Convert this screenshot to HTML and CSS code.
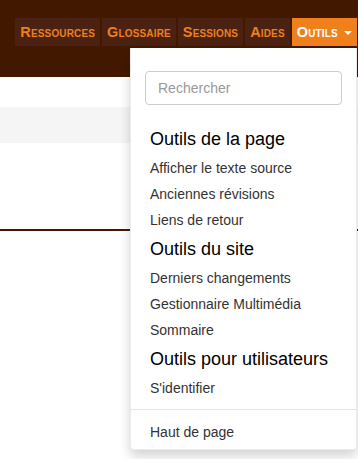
FILE: index.html
```html
<!DOCTYPE html>
<html lang="fr">
<head>
  <meta charset="UTF-8" />
  <title>Outils</title>
  <meta name="viewport" content="width=device-width, initial-scale=1.0" />
  <link rel="stylesheet" href="styles.css">
</head>
<body>

  <header class="navbar">
    <ul class="nav">
      <li class="nav-item"><a href="#">Ressources</a></li>
      <li class="nav-item"><a href="#">Glossaire</a></li>
      <li class="nav-item"><a href="#">Sessions</a></li>
      <li class="nav-item"><a href="#">Aides</a></li>
      <li class="nav-item open">
        <a href="#">Outils <span class="caret"></span></a>

        <!-- Tools dropdown -->
        <div class="dropdown-menu">
          <form class="search">
            <input type="text" placeholder="Rechercher" />
          </form>

          <div class="dropdown-header first">Outils de la page</div>
          <a class="dropdown-item" href="#">Afficher le texte source</a>
          <a class="dropdown-item" href="#">Anciennes révisions</a>
          <a class="dropdown-item" href="#">Liens de retour</a>

          <div class="dropdown-header">Outils du site</div>
          <a class="dropdown-item" href="#">Derniers changements</a>
          <a class="dropdown-item" href="#">Gestionnaire Multimédia</a>
          <a class="dropdown-item" href="#">Sommaire</a>

          <div class="dropdown-header">Outils pour utilisateurs</div>
          <a class="dropdown-item" href="#">S'identifier</a>

          <div class="divider"></div>
          <a class="dropdown-item last" href="#">Haut de page</a>
        </div>
      </li>
    </ul>
  </header>

  <div class="page">
    <div class="spacer"></div>
    <div class="breadcrumb"></div>
    <div class="content"></div>
    <div class="rule"></div>
  </div>

</body>
</html>
```

FILE: styles.css
```css
html,
body {
  min-height: 100vh;
}

body {
  font-family: 'Liberation Sans', Arial, sans-serif;
  background: #fff;
  margin: 0;
  color: #333;
}

a {
  text-decoration: none;
}

.navbar {
  background: #421900;
  height: 77px;
  padding-top: 18px;
  box-sizing: border-box;
}

.nav {
  list-style: none;
  margin: 0;
  padding: 0 1px 0 0;
  display: flex;
  justify-content: flex-end;
  gap: 2px;
}

.nav-item {
  position: relative;
  flex-shrink: 0;
}

.nav-item > a {
  display: block;
  padding: 4px 5px;
  line-height: 20px;
  font-size: 14.5px;
  font-weight: bold;
  font-variant: small-caps;
  letter-spacing: 0.15px;
  white-space: nowrap;
  color: #ec7f1e;
  background: #4b2212;
}

.nav-item.open > a {
  background: #f0801c;
  color: #fff;
}

.caret {
  display: inline-block;
  width: 0;
  height: 0;
  margin-left: 2px;
  vertical-align: middle;
  border-top: 4px solid #fff;
  border-left: 4px solid transparent;
  border-right: 4px solid transparent;
}

.dropdown-menu {
  position: absolute;
  top: calc(100% + 2px);
  right: 0;
  width: 227px;
  box-sizing: border-box;
  background: #fff;
  border: 1px solid rgba(0,0,0,0.08);
  border-top: none;
  border-radius: 0 0 4px 4px;
  box-shadow: 0 6px 12px rgba(0,0,0,0.175);
  padding-bottom: 4px;
  z-index: 10;
}

.search {
  margin: 0;
  padding: 23px 14px 0 14px;
}

.search input {
  display: block;
  width: 100%;
  height: 34px;
  box-sizing: border-box;
  padding: 6px 12px;
  border: 1px solid #ccc;
  border-radius: 4px;
  font-family: inherit;
  font-size: 14px;
  color: #555;
}

.search input::placeholder {
  color: #999;
}

.dropdown-header {
  font-size: 18px;
  line-height: 32px;
  color: #000;
  padding-left: 19px;
}

.dropdown-header.first {
  margin-top: 18px;
}

.dropdown-item {
  display: block;
  font-size: 14px;
  line-height: 26px;
  color: #333;
  padding-left: 19px;
}

.divider {
  height: 1px;
  background: #e5e5e5;
  margin: 8px 0 9px;
}

.spacer {
  height: 30px;
}

.breadcrumb {
  height: 36px;
  background: #f5f5f5;
}

.content {
  height: 86px;
}

.rule {
  height: 2px;
  background: #421900;
}
```
